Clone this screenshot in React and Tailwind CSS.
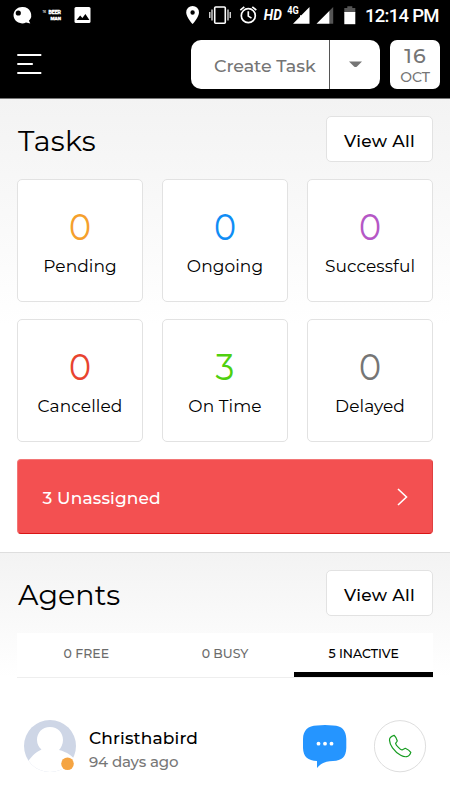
const stats = [
  { n: "0", label: "Pending", color: "text-[#f5a02c]" },
  { n: "0", label: "Ongoing", color: "text-[#0f8df5]" },
  { n: "0", label: "Successful", color: "text-[#b557c6]" },
  { n: "0", label: "Cancelled", color: "text-[#e8432f]" },
  { n: "3", label: "On Time", color: "text-[#4fd00f]" },
  { n: "0", label: "Delayed", color: "text-[#757575]" },
];

function StatusBar() {
  return (
    <div className="flex h-[30px] items-center text-white">
      <svg className="block" width="450" height="30" viewBox="0 0 450 30" fill="currentColor">
        <path d="M22.7 7a8.6 8.2 0 0 1 6.2 13.8l1.4 2.6-4.3-.9A8.6 8.2 0 1 1 22.7 7Z" />
        <circle cx="18.3" cy="13" r="2.6" fill="#000" />
        <text x="42.8" y="13" fontSize="3.4" fontWeight="700" fontFamily="Roboto, sans-serif" textLength="3" lengthAdjust="spacingAndGlyphs">THE</text>
        <text x="48.4" y="14" fontSize="5.5" fontWeight="900" fontFamily="Roboto, sans-serif" stroke="#fff" strokeWidth=".3" textLength="12.6" lengthAdjust="spacingAndGlyphs">BEER</text>
        <text x="50.5" y="19.6" fontSize="4.4" fontWeight="900" fontFamily="Roboto, sans-serif" stroke="#fff" strokeWidth=".3" textLength="10.5" lengthAdjust="spacingAndGlyphs">MAN</text>
        <rect x="74.5" y="7" width="16" height="16" rx="1.5" />
        <path d="m76.5 20 3.7-4.5 2.2 2.5 3-4 4 6Z" fill="#000" />
        <path fillRule="evenodd" d="M192.6 6a6.4 6.4 0 0 0-6.4 6.4c0 4.7 6.4 11.6 6.4 11.6s6.4-6.9 6.4-11.6A6.4 6.4 0 0 0 192.6 6Zm0 4.3a2.2 2.2 0 1 1 0 4.4 2.2 2.2 0 0 1 0-4.4Z" />
        <rect x="214.7" y="7" width="10.6" height="16.2" rx="1" fill="none" stroke="#fff" strokeWidth="1.6" />
        <path d="M212 9.5v11M228 9.5v11M209.8 12v6M230.2 12v6" stroke="#fff" strokeWidth="1.2" />
        <g fill="none" stroke="#fff" strokeWidth="1.7">
          <circle cx="248.3" cy="15.7" r="7" />
          <path d="M248.3 11.3v4.8l3.2 2M240.3 10.1l4-3.3M256.3 10.1l-4-3.3" />
        </g>
        <text x="263.8" y="20.3" fontSize="15.5" fontWeight="700" fontStyle="italic" fontFamily="Roboto, sans-serif" textLength="18" lengthAdjust="spacingAndGlyphs">HD</text>
        <text x="287.3" y="14" fontSize="10.5" fontWeight="700" fontFamily="Roboto, sans-serif" textLength="11.5" lengthAdjust="spacingAndGlyphs">4G</text>
        <path d="M309.5 7v16.7H293l7-7v-1.5h1.4Z" />
        <path d="M333.2 7v16.7h-3.5V10.5Z" fill="#555" />
        <path d="M329.5 10.8v12.9h-13Z" />
        <path d="M344.3 8h3v-1.8h5V8h3v5h-11Z" fill="#555" />
        <path d="M344.3 12h11v12.2h-11Z" />
        <text x="365" y="21.9" fontSize="18.5" fontWeight="500" fontFamily="Roboto, sans-serif" textLength="74.5">12:14 PM</text>
      </svg>
    </div>
  );
}

function SectionHead({ title, className }) {
  return (
    <div className="flex h-[46px] items-center justify-between">
      <h2 className={`pt-1 pl-px text-[28.5px] leading-[42px] text-black ${className}`}>{title}</h2>
      <button className="h-[46px] w-[107px] rounded-[5px] border border-[#e2e2e2] bg-white pt-1 text-[17px] font-medium leading-none tracking-[0.3px] text-black">
        View All
      </button>
    </div>
  );
}

export default function App() {
  return (
    <main className="h-[800px] w-[450px] overflow-hidden bg-white font-['Montserrat',Inter,sans-serif]">
      <header className="h-[99px] border-b border-[#777] bg-black">
        <StatusBar />
        <div className="flex items-start pt-2.5 pl-[17px]">
          <svg className="mt-3.5" width="25" height="21" viewBox="0 0 25 21" stroke="#fff" strokeWidth="1.9">
            <path d="M.3 1h24M.3 10h15.5M.3 19h24" />
          </svg>
          <div className="ml-[149px] flex h-[49px] w-[189px] overflow-hidden rounded-[10px] bg-white">
            <div className="w-[139px] border-r border-[#555] pl-[23px] text-[17.5px] font-medium leading-[52px] tracking-[-0.08px] whitespace-nowrap text-[#757575]">Create Task</div>
            <svg className="mt-[21px] ml-[19px]" width="13" height="7" fill="#757575"><path d="M0 .5h13L8 5.5q-1.5 1.2-3 0Z" /></svg>
          </div>
          <div className="ml-2.5 h-[49px] w-[50px] rounded-[7px] bg-white text-center text-[#757575]">
            <div className="pt-[5px] pl-px text-[20.5px] font-medium leading-[21px] tracking-[1.2px]">16</div>
            <div className="text-[14px] leading-[22px] font-medium">OCT</div>
          </div>
        </div>
      </header>

      <section className="h-[453px] bg-linear-to-b from-[#f3f3f3] to-white to-50% px-[17px] pt-[17px]">
        <SectionHead title="Tasks" className="tracking-[0.25px]" />
        <div className="mt-[17px] grid grid-cols-3 gap-x-[19px] gap-y-[17px]">
          {stats.map((s) => (
            <div key={s.label} className="h-[123px] rounded-[5px] border border-[#e2e2e2] bg-white text-center">
              <div className={`mt-[26px] scale-x-90 text-[37px] leading-[42px] ${s.color}`}>{s.n}</div>
              <div className="pt-px text-[17px] leading-[34px] tracking-[0.08px] text-black">{s.label}</div>
            </div>
          ))}
        </div>
        <div className="mt-[17px] flex h-[75px] items-center justify-between rounded-[4px] border border-t-[#f27676] border-r-[#e04040] border-b-[#d91515] border-l-[#f27676] bg-[#f35051] pr-[24px] pl-[24.5px] text-[17px] font-medium tracking-[0.15px] text-white">
          <span className="pt-1">3 Unassigned</span>
          <svg width="11" height="18" fill="none" stroke="#fff" strokeWidth="1.6"><path d="m1 1 8.5 8L1 17" /></svg>
        </div>
      </section>

      <section className="h-[248px] border-t border-[#dedede] bg-linear-to-b from-[#f3f3f3] to-white to-50% px-[17px] pt-[17px]">
        <SectionHead title="Agents" className="tracking-[0.1px]" />
        <div className="mt-[17px] grid h-[45px] grid-cols-3 border-b border-[#eeeeee] bg-white text-center text-[12.5px] font-medium leading-[41px] text-[#6c6c6c]">
          <div>0 FREE</div>
          <div>0 BUSY</div>
          <div className="h-[44px] border-b-5 border-black text-black">5 INACTIVE</div>
        </div>
        <div className="mt-[42px] flex items-start pl-[7px]">
          <svg width="52" height="52" viewBox="0 0 52 52">
            <defs><clipPath id="avatar"><circle cx="26" cy="26" r="26" /></clipPath></defs>
            <g clipPath="url(#avatar)">
              <path fill="#ced6e6" d="M0 0h52v52H0Z" />
              <path fill="#fff" d="M26 7c8 0 13 5.8 13 13 0 4-2 8-4 10 8 2 14 6 17 12v10H0V48c5-9 10-15 17.5-18.5-2.500-2-4.500-5.500-4.500-9.500C13 12.800 18 7 26 7Z" />
            </g>
            <circle cx="43.5" cy="43.7" r="8" fill="#fff" />
            <circle cx="43.5" cy="43.7" r="6.3" fill="#f5a442" />
          </svg>
          <div className="ml-[13px] w-[214px] pt-[6px]">
            <div className="text-[17px] font-medium leading-6 tracking-[0.15px] text-black">Christhabird</div>
            <div className="text-[15px] font-medium leading-[23px] tracking-[-0.15px] text-[#777]">94 days ago</div>
          </div>
          <svg className="mt-[5px]" width="44" height="44" viewBox="0 0 44 44">
            <path fill="#2595ff" d="M14 .5Q22-.5 30 .5C39 1 43 5 43.3 14v9c-.3 9-4.3 12.5-13.3 13-7 0-12 2-16 7v-7C5 35.5.3 32 0 23v-9C.3 5 5 1 14 .5Z" />
            <g fill="#fff"><circle cx="15.5" cy="18.7" r="1.9" /><circle cx="22" cy="18.7" r="1.9" /><circle cx="28.5" cy="18.7" r="1.9" /></g>
          </svg>
          <svg className="ml-[27px]" width="53" height="53" viewBox="0 0 53 53" fill="none">
            <circle cx="26" cy="26.2" r="25.6" stroke="#dedede" />
            <path transform="translate(-.6 -.2)" stroke="#169c20" strokeWidth="1.2" strokeLinejoin="round" d="M20.7 15.5c-2.7.8-4.8 2.3-4.6 4.8.2 3 1.2 5.4 3 7.8 2.4 3.3 5 5.7 8.2 7.4 2 1.1 3.9 1.6 5.9 1.4 2-.2 3.5-2 4.2-4.3-1.3-2-3.5-3.3-5.5-4.1l-3.3 1.7c-1.1-.2-2.4-1.3-3.6-2.6-1.3-1.3-2.6-2.9-2.8-4.1l1.7-2.3c-.6-2.3-1.6-4.3-3.2-5.7Z" />
          </svg>
        </div>
      </section>
    </main>
  );
}
